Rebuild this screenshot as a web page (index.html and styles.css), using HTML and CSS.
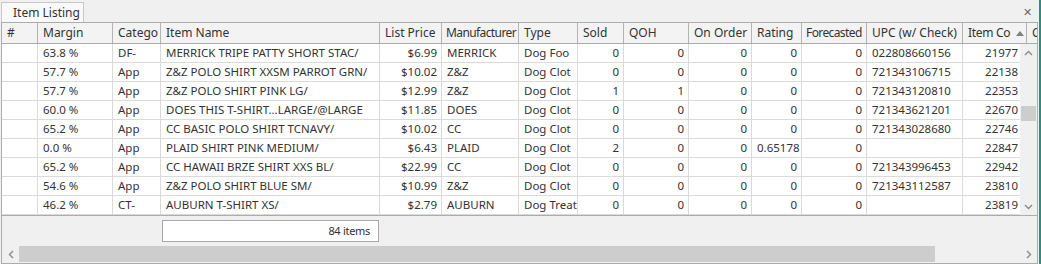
FILE: index.html
```html
<!DOCTYPE html>
<html lang="en">

<head>
    <meta charset="UTF-8" />
    <meta name="viewport" content="width=device-width, initial-scale=1.0" />
    <title>Item Listing</title>
    <link rel="stylesheet" href="styles.css">
</head>

<body>
    <div class="window">
        <div class="tabs">
            <div class="tab">Item Listing</div>
            <div class="close">&#x2715;</div>
        </div>

        <div class="grid">
            <div class="header row">
                <div class="cell c1">#</div>
                <div class="cell c2">Margin</div>
                <div class="cell c3">Catego</div>
                <div class="cell c4">Item Name</div>
                <div class="cell c5">List Price</div>
                <div class="cell c6 tight">Manufacturer</div>
                <div class="cell c7">Type</div>
                <div class="cell c8">Sold</div>
                <div class="cell c9">QOH</div>
                <div class="cell c10">On Order</div>
                <div class="cell c11">Rating</div>
                <div class="cell c12 tight">Forecasted</div>
                <div class="cell c13">UPC (w/ Check)</div>
                <div class="cell c14 sorted">Item Co<svg class="sort" width="8" height="5" viewBox="0 0 8 5"><path d="M0 5 L4 0 L8 5 Z" fill="#808080"/></svg></div>
                <div class="cell c15">Ca</div>
            </div>

            <div class="body">
                <div class="rows">
                    <div class="row">
                        <div class="cell c1"></div><div class="cell c2">63.8 %</div><div class="cell c3">DF-</div>
                        <div class="cell c4">MERRICK TRIPE PATTY SHORT STAC/</div><div class="cell c5 num">$6.99</div>
                        <div class="cell c6">MERRICK</div><div class="cell c7">Dog Foo</div><div class="cell c8 num">0</div>
                        <div class="cell c9 num">0</div><div class="cell c10 num">0</div><div class="cell c11 num">0</div>
                        <div class="cell c12 num">0</div><div class="cell c13">022808660156</div><div class="cell c14 num">21977</div>
                    </div>
                    <div class="row">
                        <div class="cell c1"></div><div class="cell c2">57.7 %</div><div class="cell c3">App</div>
                        <div class="cell c4">Z&amp;Z POLO SHIRT XXSM PARROT GRN/</div><div class="cell c5 num">$10.02</div>
                        <div class="cell c6">Z&amp;Z</div><div class="cell c7">Dog Clot</div><div class="cell c8 num">0</div>
                        <div class="cell c9 num">0</div><div class="cell c10 num">0</div><div class="cell c11 num">0</div>
                        <div class="cell c12 num">0</div><div class="cell c13">721343106715</div><div class="cell c14 num">22138</div>
                    </div>
                    <div class="row">
                        <div class="cell c1"></div><div class="cell c2">57.7 %</div><div class="cell c3">App</div>
                        <div class="cell c4">Z&amp;Z POLO SHIRT PINK LG/</div><div class="cell c5 num">$12.99</div>
                        <div class="cell c6">Z&amp;Z</div><div class="cell c7">Dog Clot</div><div class="cell c8 num">1</div>
                        <div class="cell c9 num">1</div><div class="cell c10 num">0</div><div class="cell c11 num">0</div>
                        <div class="cell c12 num">0</div><div class="cell c13">721343120810</div><div class="cell c14 num">22353</div>
                    </div>
                    <div class="row">
                        <div class="cell c1"></div><div class="cell c2">60.0 %</div><div class="cell c3">App</div>
                        <div class="cell c4">DOES THIS T-SHIRT...LARGE/@LARGE</div><div class="cell c5 num">$11.85</div>
                        <div class="cell c6">DOES</div><div class="cell c7">Dog Clot</div><div class="cell c8 num">0</div>
                        <div class="cell c9 num">0</div><div class="cell c10 num">0</div><div class="cell c11 num">0</div>
                        <div class="cell c12 num">0</div><div class="cell c13">721343621201</div><div class="cell c14 num">22670</div>
                    </div>
                    <div class="row">
                        <div class="cell c1"></div><div class="cell c2">65.2 %</div><div class="cell c3">App</div>
                        <div class="cell c4">CC BASIC POLO SHIRT TCNAVY/</div><div class="cell c5 num">$10.02</div>
                        <div class="cell c6">CC</div><div class="cell c7">Dog Clot</div><div class="cell c8 num">0</div>
                        <div class="cell c9 num">0</div><div class="cell c10 num">0</div><div class="cell c11 num">0</div>
                        <div class="cell c12 num">0</div><div class="cell c13">721343028680</div><div class="cell c14 num">22746</div>
                    </div>
                    <div class="row">
                        <div class="cell c1"></div><div class="cell c2">0.0 %</div><div class="cell c3">App</div>
                        <div class="cell c4">PLAID SHIRT PINK MEDIUM/</div><div class="cell c5 num">$6.43</div>
                        <div class="cell c6">PLAID</div><div class="cell c7">Dog Clot</div><div class="cell c8 num">2</div>
                        <div class="cell c9 num">0</div><div class="cell c10 num">0</div><div class="cell c11 num">0.65178</div>
                        <div class="cell c12 num">0</div><div class="cell c13"></div><div class="cell c14 num">22847</div>
                    </div>
                    <div class="row">
                        <div class="cell c1"></div><div class="cell c2">65.2 %</div><div class="cell c3">App</div>
                        <div class="cell c4">CC HAWAII BRZE SHIRT XXS BL/</div><div class="cell c5 num">$22.99</div>
                        <div class="cell c6">CC</div><div class="cell c7">Dog Clot</div><div class="cell c8 num">0</div>
                        <div class="cell c9 num">0</div><div class="cell c10 num">0</div><div class="cell c11 num">0</div>
                        <div class="cell c12 num">0</div><div class="cell c13">721343996453</div><div class="cell c14 num">22942</div>
                    </div>
                    <div class="row">
                        <div class="cell c1"></div><div class="cell c2">54.6 %</div><div class="cell c3">App</div>
                        <div class="cell c4">Z&amp;Z POLO SHIRT BLUE SM/</div><div class="cell c5 num">$10.99</div>
                        <div class="cell c6">Z&amp;Z</div><div class="cell c7">Dog Clot</div><div class="cell c8 num">0</div>
                        <div class="cell c9 num">0</div><div class="cell c10 num">0</div><div class="cell c11 num">0</div>
                        <div class="cell c12 num">0</div><div class="cell c13">721343112587</div><div class="cell c14 num">23810</div>
                    </div>
                    <div class="row">
                        <div class="cell c1"></div><div class="cell c2">46.2 %</div><div class="cell c3">CT-</div>
                        <div class="cell c4">AUBURN T-SHIRT XS/</div><div class="cell c5 num">$2.79</div>
                        <div class="cell c6">AUBURN</div><div class="cell c7">Dog Treat</div><div class="cell c8 num">0</div>
                        <div class="cell c9 num">0</div><div class="cell c10 num">0</div><div class="cell c11 num">0</div>
                        <div class="cell c12 num">0</div><div class="cell c13"></div><div class="cell c14 num">23819</div>
                    </div>
                </div>

                <div class="vscroll">
                    <div class="arrow">
                        <svg width="9" height="6" viewBox="0 0 9 6"><path d="M1 5 L4.5 1.5 L8 5" fill="none" stroke="#8a8a8a" stroke-width="1.4"/></svg>
                    </div>
                    <div class="vtrack">
                        <div class="vthumb"></div>
                    </div>
                    <div class="arrow">
                        <svg width="9" height="6" viewBox="0 0 9 6"><path d="M1 1 L4.5 4.5 L8 1" fill="none" stroke="#8a8a8a" stroke-width="1.4"/></svg>
                    </div>
                </div>
            </div>

            <div class="footer">
                <div class="summary">84 items</div>
            </div>

            <div class="hscroll">
                <div class="harrow">
                    <svg width="6" height="9" viewBox="0 0 6 9"><path d="M5 1 L1.5 4.5 L5 8" fill="none" stroke="#8a8a8a" stroke-width="1.4"/></svg>
                </div>
                <div class="hthumb"></div>
                <div class="htrack"></div>
                <div class="harrow">
                    <svg width="6" height="9" viewBox="0 0 6 9"><path d="M1 1 L4.5 4.5 L1 8" fill="none" stroke="#8a8a8a" stroke-width="1.4"/></svg>
                </div>
            </div>
        </div>
    </div>
</body>

</html>
```

FILE: styles.css
```css
body {
    margin: 0;
    font-family: "Noto Sans", "Open Sans", sans-serif;
    font-size: 11.5px;
    color: #333;
    background-color: #f0f0f0;
}

.window {
    width: 1041px;
    height: 264px;
    overflow: hidden;
    border-right: 2px solid #24907e;
    box-sizing: border-box;
}

.tabs {
    display: flex;
    align-items: flex-end;
    justify-content: space-between;
    height: 22px;
}

.tab {
    width: 83px;
    height: 20px;
    margin-left: 1px;
    padding-left: 11px;
    border: 1px solid #c8c8c8;
    border-bottom: none;
    background-color: #f9f9f9;
    box-sizing: border-box;
    line-height: 19px;
    font-size: 12px;
}

.close {
    font-size: 11px;
    color: #666;
    margin-right: 7px;
    align-self: center;
    padding-top: 1px;
}

.grid {
    width: 1037px;
    margin-left: 1px;
    border-top: 1px solid #acacac;
    border-left: 1px solid #acacac;
    border-right: 1px solid #acacac;
    box-sizing: border-box;
    overflow: hidden;
}

.row {
    display: flex;
    height: 19px;
    border-bottom: 1px solid #dadada;
    box-sizing: border-box;
    background-color: #fff;
    white-space: nowrap;
}

.cell {
    flex: none;
    overflow: hidden;
    padding: 0 4px 0 5px;
    line-height: 18px;
    border-right: 1px solid #dadada;
    box-sizing: border-box;
}

.num {
    text-align: right;
}

.header {
    height: 21px;
    background-color: #f3f3f3;
    border-bottom: 1px solid #acacac;
}

.header .cell {
    line-height: 20px;
    font-size: 12px;
    border-right-color: #b4b4b4;
}

.header .tight {
    padding: 0 2px 0 4px;
    letter-spacing: -0.6px;
}

.header .sorted {
    display: flex;
    align-items: center;
    padding: 0 2px 0 5px;
    letter-spacing: -0.3px;
}

.sort {
    flex: none;
    margin-left: 6px;
}

.c1 { width: 36px; }
.c2 { width: 75px; }
.c3 { width: 48px; }
.c4 { width: 219px; }
.c5 { width: 62px; }
.c6 { width: 77px; }
.c7 { width: 59px; }
.c8 { width: 46px; }
.c9 { width: 65px; }
.c10 { width: 63px; }
.c11 { width: 50px; }
.c12 { width: 65px; }
.c13 { width: 96px; }
.c14 { width: 64px; padding-right: 8px; }
.c15 { width: 30px; }

.body {
    display: flex;
    height: 172px;
    border-bottom: 1px solid #acacac;
    box-sizing: border-box;
}

.rows {
    width: 1018px;
    overflow: hidden;
    flex: none;
}

.vscroll {
    flex: 1;
    display: flex;
    flex-direction: column;
    background-color: #f0f0f0;
}

.arrow {
    height: 17px;
    display: flex;
    align-items: center;
    justify-content: center;
}

.vtrack {
    flex: 1;
    padding-top: 45px;
}

.vthumb {
    height: 15px;
    margin: 0 1px;
    background-color: #cdcdcd;
}

.footer {
    height: 29px;
    padding: 4px 0 0 160px;
    box-sizing: border-box;
    background-color: #f0f0f0;
}

.summary {
    width: 217px;
    height: 22px;
    border: 1px solid #a8a8a8;
    background-color: #fff;
    box-sizing: border-box;
    text-align: right;
    padding-right: 8px;
    font-size: 11px;
    line-height: 20px;
    letter-spacing: -0.3px;
}

.hscroll {
    display: flex;
    height: 18px;
    background-color: #f0f0f0;
    border-bottom: 1px solid #acacac;
}

.harrow {
    width: 17px;
    display: flex;
    align-items: center;
    justify-content: center;
    flex: none;
}

.hthumb {
    width: 916px;
    margin: 1px 0;
    background-color: #cdcdcd;
    flex: none;
}

.htrack {
    flex: 1;
}
```
